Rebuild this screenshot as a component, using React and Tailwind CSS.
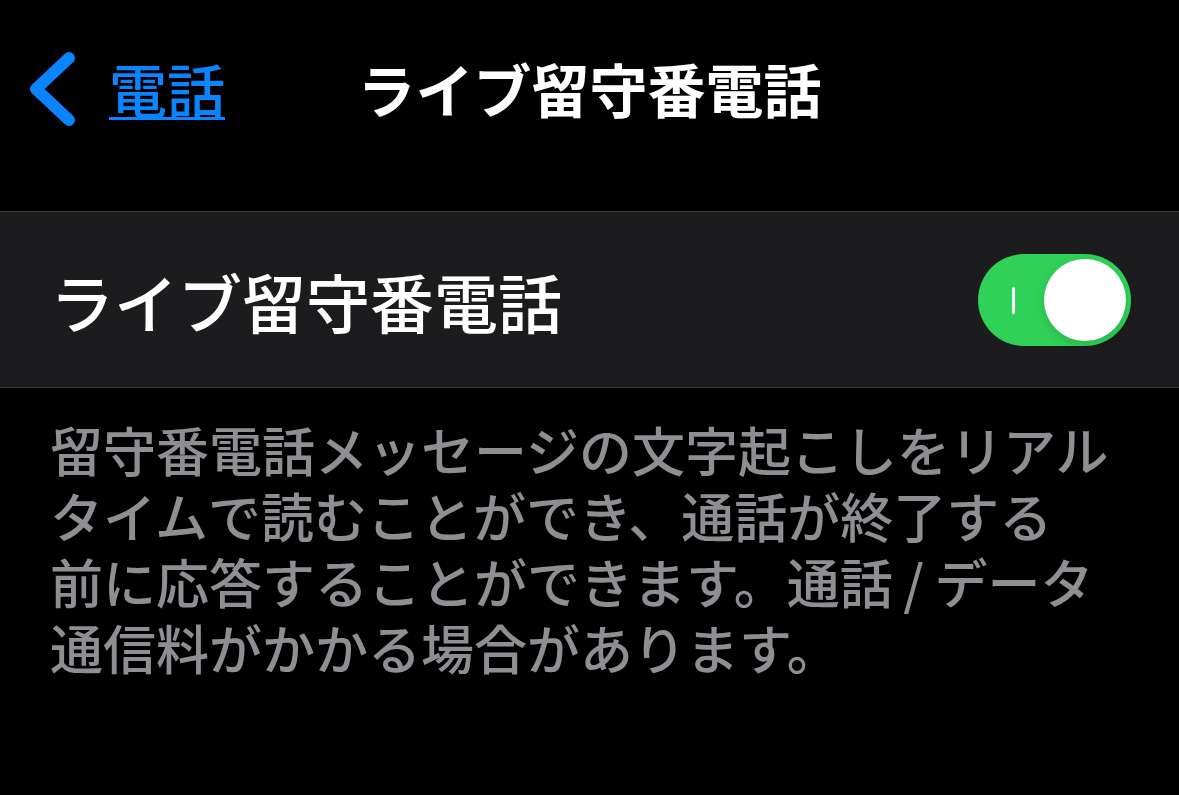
export default function App() {
  const font = { fontFamily: '"Noto Sans CJK JP", "Noto Sans", sans-serif' };
  return (
    <div className="w-[1179px] h-[795px] bg-black overflow-hidden" style={font}>
      <div className="grid grid-cols-[1fr_auto_1fr] items-center h-[176px]">
        <div className="flex items-center">
          <svg width="50" height="80" viewBox="0 0 50 80" className="ml-[26px] mt-[2px]">
            <path d="M43 9 L10 40 L43 71" fill="none" stroke="#0a84ff" strokeWidth="12" strokeLinecap="round" strokeLinejoin="round" />
          </svg>
          <span className="ml-[33px] text-[58px] leading-none font-medium text-[#0a84ff] underline decoration-[3px] underline-offset-[4px]">電話</span>
        </div>
        <div className="text-[58px] leading-none font-bold text-white">ライブ留守番電話</div>
        <div />
      </div>
      <div className="mt-[35px] h-[177px] bg-[#1c1c1e] border-y border-[#3a3a3c] flex items-center justify-between pl-[50px] pr-[48px]">
        <span className="text-[64px] leading-none font-medium text-white">ライブ留守番電話</span>
        <div className="relative w-[153px] h-[92px] rounded-full bg-[#30d158]">
          <div className="absolute left-[34px] top-[33px] w-[3px] h-[27px] bg-white rounded-sm" />
          <div className="absolute right-[5px] top-[5px] w-[82px] h-[82px] rounded-full bg-white shadow-[0_3px_8px_rgba(0,0,0,0.15)]" />
        </div>
      </div>
      <div className="pt-[28px] pl-[50px] text-[53px] leading-[66px] font-medium text-[#8e8e93]">
        <div>留守番電話メッセージの文字起こしをリアル</div>
        <div>タイムで読むことができ、通話が終了する</div>
        <div>前に応答することができます。通話{"\u2009"}/{"\u2009"}データ</div>
        <div>通信料がかかる場合があります。</div>
      </div>
    </div>
  );
}
